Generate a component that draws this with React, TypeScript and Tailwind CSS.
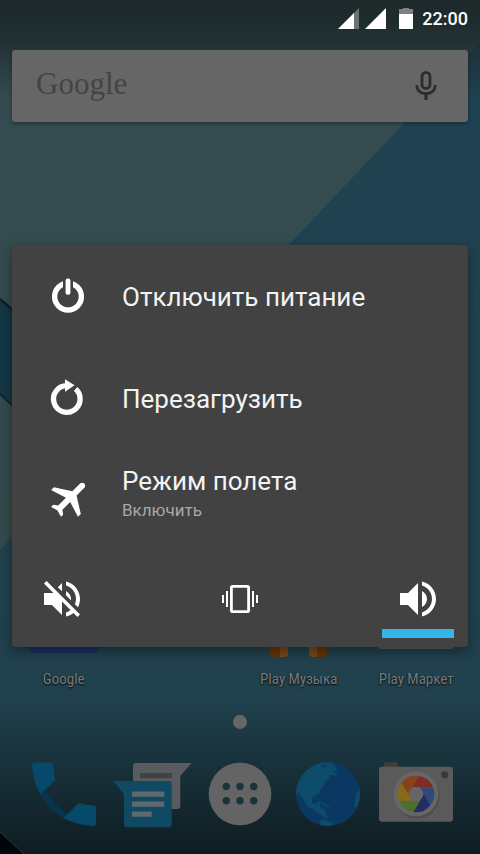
import React, { useState } from 'react';

type RingMode = 'silent' | 'vibrate' | 'normal';

const BLADES = ['#822a24', '#2f4a7a', '#262c60', '#4a702c', '#86691a', '#85431a'];

function Wallpaper() {
  return (
    <svg className="absolute inset-0 h-full w-full" viewBox="0 0 480 854" preserveAspectRatio="none" aria-hidden="true">
      <defs>
        <linearGradient id="paper" x1="0" y1="0" x2="0" y2="1">
          <stop offset="0" stopColor="#2f464c" />
          <stop offset="0.15" stopColor="#344c51" />
          <stop offset="1" stopColor="#35494b" />
        </linearGradient>
        <linearGradient id="water" x1="0" y1="0" x2="0" y2="1">
          <stop offset="0" stopColor="#1f4252" />
          <stop offset="0.7" stopColor="#20414d" />
          <stop offset="1" stopColor="#1f404c" />
        </linearGradient>
        <linearGradient id="topShade" x1="0" y1="0" x2="0" y2="1">
          <stop offset="0" stopColor="#1a2425" stopOpacity="0.9" />
          <stop offset="0.4" stopColor="#1a2425" stopOpacity="0.65" />
          <stop offset="1" stopColor="#1a2425" stopOpacity="0" />
        </linearGradient>
        <linearGradient id="bottomShade" x1="0" y1="0" x2="0" y2="1">
          <stop offset="0" stopColor="#0c161b" stopOpacity="0" />
          <stop offset="1" stopColor="#0c161b" stopOpacity="0.85" />
        </linearGradient>
      </defs>
      <rect width="480" height="854" fill="url(#water)" />
      <path d="M0 0H480V43L12 537L0 550Z" fill="url(#paper)" />
      <path d="M0 299L60 350V450L0 394Z" fill="#143646" />
      <path d="M0 299L60 350" stroke="#0d1a20" strokeWidth="2" />
      <path d="M0 394L60 450" stroke="#10242e" strokeWidth="2" />
      <rect width="480" height="100" fill="url(#topShade)" />
      <rect y="700" width="480" height="154" fill="url(#bottomShade)" />
      <path d="M0 832L24 854H0Z" fill="#02060a" />
      <path d="M0 832L24 854" stroke="#2a3b43" strokeWidth="1" />
    </svg>
  );
}

function StatusBar() {
  return (
    <header className="relative flex h-[38px] items-center justify-end px-3 text-white">
      <svg className="mr-[6px]" width="21" height="22" viewBox="0 0 21 22" aria-hidden="true">
        <path d="M21 0V21H0Z" fill="#6a7475" />
        <path d="M16 5V21H0Z" fill="#fff" />
      </svg>
      <svg className="mr-3" width="21" height="22" viewBox="0 0 21 22" aria-hidden="true">
        <path d="M21 0V21H0Z" fill="#fff" />
      </svg>
      <svg className="mr-[9px]" width="15" height="22" viewBox="0 0 15 22" aria-hidden="true">
        <path d="M5 -1H11V1H15V6H1V1H5Z" fill="#7a8283" />
        <path d="M1 6H15V21H1Z" fill="#fff" />
      </svg>
      <time className="text-[18px] leading-6 font-medium">22:00</time>
    </header>
  );
}

function SearchBar() {
  return (
    <form className="relative mx-3 mt-3 flex h-[72px] items-center rounded-[3px] bg-[#666] pr-5 pl-6 shadow-[0_2px_4px_rgba(0,0,0,0.3)]">
      <label htmlFor="search" className="pb-1 font-['Liberation_Serif',serif] text-[31px] leading-9 text-[#444]">
        Google
      </label>
      <input id="search" type="text" className="h-full min-w-0 flex-1 bg-transparent outline-none" />
      <button type="button" aria-label="Голосовой поиск">
        <svg width="44" height="44" viewBox="0 0 44 44" fill="none" stroke="#2d2d2d" strokeWidth="2.8">
          <rect x="18" y="8.4" width="8" height="16" rx="4" />
          <path d="M12.8 21C12.8 26.500 16.800 29.700 22 29.700S31.200 26.500 31.200 21" />
          <path d="M22 29.500V36" strokeWidth="3.2" />
        </svg>
      </button>
    </form>
  );
}

function AppLabel({ children }: { children: React.ReactNode }) {
  return (
    <span className="mt-[9px] font-['Roboto_Condensed','Liberation_Sans_Narrow',Roboto,sans-serif] text-[15px] leading-6 whitespace-nowrap text-[#777] [text-shadow:0_1px_2px_#000]">
      {children}
    </span>
  );
}

function AppRow() {
  return (
    <nav className="relative mt-auto grid grid-cols-4 px-[5px]">
      <a href="#google" className="flex flex-col items-center">
        <svg width="72" height="72" viewBox="0 0 72 72" aria-hidden="true">
          <rect x="2" y="4" width="68" height="63" rx="3" fill="#1d2d60" />
        </svg>
        <AppLabel>Google</AppLabel>
      </a>
      <a href="#music" className="col-start-3 flex flex-col items-center">
        <svg width="72" height="72" viewBox="0 0 72 72" aria-hidden="true">
          <path d="M6 62C-2 30 14 6 36 6S74 30 66 62" fill="none" stroke="#6b3208" strokeWidth="5" />
          <path d="M6 42H25V67Q25 71 21 71H12Q8 71 7 67Z" fill="#6b3208" />
          <path d="M16 42H25V67Q25 71 21 71H17Z" fill="#79481a" />
          <path d="M66 42H46V67Q46 71 50 71H60Q63 71 64 67Z" fill="#6b3208" />
          <path d="M55 42H46V67Q46 71 50 71H54Z" fill="#79481a" />
        </svg>
        <AppLabel>Play Музыка</AppLabel>
      </a>
      <a href="#market" className="flex flex-col items-center">
        <svg className="overflow-visible" width="72" height="72" viewBox="0 0 72 72" aria-hidden="true">
          <rect x="-2" y="12" width="76" height="51" rx="3" fill="#5c5f5f" />
        </svg>
        <AppLabel>Play Маркет</AppLabel>
      </a>
    </nav>
  );
}

function Dock() {
  return (
    <nav className="relative grid grid-cols-5 justify-items-center px-5 pb-6">
      <button type="button" aria-label="Телефон">
        <svg width="72" height="72" viewBox="0 0 72 72">
          <path d="M6.500 4.500H22.500Q25 4.500 25.200 7L27 22L12.700 36.700C7 27 4.500 17 4 7Q4 4.500 6.500 4.500Z" fill="#07496a" />
          <path d="M12.700 36.700L17.500 32C22 42 30 50 40 55.700L35.300 60.300C25 54.500 18 46.500 12.700 36.700Z" fill="#06344f" />
          <path d="M51 45Q58 47.500 65.500 47.500Q68 47.500 68 50V65.500Q68 68 65.500 68C55 67.500 45 65 35.300 60.300Z" fill="#07496a" />
        </svg>
      </button>
      <button type="button" aria-label="Сообщения">
        <svg className="overflow-visible" width="72" height="72" viewBox="0 0 72 72">
          <path d="M20 5H75.700L64.300 18V48Q64.300 51 61.300 51H20Q17 51 17 48V8Q17 5 20 5Z" fill="#585c5e" />
          <path d="M24 15H56.300V20.300H24Z" fill="#3f4345" />
          <path d="M-2.700 23H52.700Q55.700 23 55.700 26V66.300Q55.700 69.300 52.700 69.300H11Q8 69.300 8 66.300V36Z" fill="#0f4962" />
          <path d="M16 33.500H48.300V38.700H16ZM16 43.500H48.300V48.700H16ZM16 53.500H35.700V58.700H16Z" fill="#62696c" />
        </svg>
      </button>
      <button type="button" aria-label="Все приложения">
        <svg width="72" height="72" viewBox="0 0 72 72">
          <circle cx="36" cy="36" r="31.300" fill="#646464" />
          {[28.5, 42.7].map((cy) =>
            [22.3, 36, 49.7].map((cx) => <circle key={`${cx}-${cy}`} cx={cx} cy={cy} r="3.700" fill="#1b333b" />)
          )}
        </svg>
      </button>
      <button type="button" aria-label="Браузер">
        <svg width="72" height="72" viewBox="0 0 72 72">
          <defs>
            <clipPath id="globe">
              <circle cx="36" cy="36" r="32" />
            </clipPath>
          </defs>
          <g clipPath="url(#globe)">
            <rect width="72" height="72" fill="#0a3862" />
            <path d="M25 3H38L44 8L45 12L41 14L46 15L44 18L39 17L36 21L34 23L31 28L28 33L27 36L22 38L20 40V45L24 46L26 43L29 45L28 49L31 51L34 54L36 61L31 58L26 55L21 51L16 49L10 39L6 35L2 39V20Z" fill="#0c4b6a" />
            <path d="M28 42L34 47L38 49L37 50L31 47Z" fill="#0c4b6a" />
            <path d="M27 70L29 61L34 62L42 66L39 70Z" fill="#0c4b6a" />
            <path d="M69 29L64 36L63 45L62 49L66 50L70 40Z" fill="#0c4b6a" />
            <path d="M29 7L33 5L35 9L31 10Z" fill="#0a3f66" />
          </g>
        </svg>
      </button>
      <button type="button" aria-label="Камера">
        <svg className="overflow-visible" width="72" height="72" viewBox="0 0 72 72">
          <path d="M6 4H16Q18 4 18 6V10H4V6Q4 4 6 4Z" fill="#403d3d" />
          <rect x="-1" y="8.700" width="74" height="55" rx="3" fill="#5a5a5a" />
          <circle cx="64.700" cy="16.700" r="3.500" fill="#383838" />
          <circle cx="37" cy="38" r="22.500" fill="#4c4c4c" />
          <circle cx="36" cy="36" r="22.500" fill="#666" />
          <g transform="translate(36 36)">
            {BLADES.map((fill, i) => (
              <path key={fill} d="M-3.900 -6.800H17A18.300 18.300 0 0 0 2.600 -18.100Z" fill={fill} transform={`rotate(${i * 60})`} />
            ))}
            <circle r="7.200" fill="#666" />
          </g>
        </svg>
      </button>
    </nav>
  );
}

interface MenuItemProps {
  icon: React.ReactNode;
  title: string;
  subtitle?: string;
}

function MenuItem({ icon, title, subtitle }: MenuItemProps) {
  return (
    <button type="button" className="flex h-[102px] w-full items-center gap-[34px] px-9 text-left">
      <svg className="shrink-0" width="40" height="40" viewBox="0 0 40 40" fill="none" aria-hidden="true">
        {icon}
      </svg>
      <span className={subtitle ? 'flex flex-col pb-3' : 'flex flex-col pt-0.5'}>
        <span className="text-[26px] leading-8 text-[#f3f3f3]">{title}</span>
        {subtitle && <span className="text-[17px] leading-[26px] text-[#a9a9a9]">{subtitle}</span>}
      </span>
    </button>
  );
}

const RING_MODES: { mode: RingMode; label: string; icon: React.ReactNode }[] = [
  {
    mode: 'silent',
    label: 'Без звука',
    icon: (
      <path d="M16.500 12c0-1.770-1.020-3.290-2.500-4.030v2.210l2.450 2.450c.03-.2.05-.41.05-.63zm2.500 0c0 .94-.2 1.820-.54 2.640l1.510 1.510C20.630 14.910 21 13.500 21 12c0-4.280-2.990-7.860-7-8.770v2.060c2.890.86 5 3.540 5 6.710zM4.270 3L3 4.270 7.730 9H3v6h4l5 5v-6.730l4.250 4.250c-.67.52-1.420.93-2.250 1.180v2.060c1.380-.31 2.630-.95 3.690-1.810L19.730 21 21 19.730l-9-9L4.270 3zM12 4L9.910 6.090 12 8.180V4z" />
    ),
  },
  {
    mode: 'vibrate',
    label: 'Вибрация',
    icon: (
      <>
        <path d="M3 10h1v4H3zM5 8h1v8H5zM18 8h1v8h-1zM20 10h1v4h-1z" />
        <rect x="7.700" y="5.700" width="8.600" height="12.600" rx="0.700" fill="none" stroke="#fff" strokeWidth="1.400" />
      </>
    ),
  },
  {
    mode: 'normal',
    label: 'Со звуком',
    icon: (
      <path d="M3 9v6h4l5 5V4L7 9H3zm13.500 3c0-1.770-1.020-3.290-2.500-4.030v8.050c1.480-.73 2.500-2.250 2.500-4.020zM14 3.230v2.060c2.890.86 5 3.540 5 6.710s-2.110 5.850-5 6.710v2.060c4.010-.91 7-4.490 7-8.770s-2.990-7.860-7-8.770z" />
    ),
  },
];

function PowerMenu() {
  const [ringMode, setRingMode] = useState<RingMode>('normal');

  return (
    <div role="dialog" aria-label="Меню питания" className="w-full rounded bg-[#424242] shadow-[0_4px_12px_rgba(0,0,0,0.4)]">
      <MenuItem
        title="Отключить питание"
        icon={
          <>
            <circle cx="20" cy="20.600" r="13.400" stroke="#fff" strokeWidth="5.400" />
            <path d="M15 0H25V19H15Z" fill="#424242" />
            <rect x="17.600" y="2.600" width="4.800" height="16.200" rx="2" fill="#fff" />
          </>
        }
      />
      <MenuItem
        title="Перезагрузить"
        icon={
          <>
            <path d="M27.600 11A13.300 13.300 0 1 1 19 7.700" stroke="#fff" strokeWidth="5.300" />
            <path d="M17 1.300L26.600 7.300L17 13.700Z" fill="#fff" />
          </>
        }
      />
      <MenuItem
        title="Режим полета"
        subtitle="Включить"
        icon={
          <path
            transform="translate(22.900 -15.500) scale(2) rotate(45)"
            fill="#fff"
            d="M21 16v-2l-8-5V3.500c0-.83-.67-1.500-1.500-1.500S10 2.670 10 3.500V9l-8 5v2l8-2.500V19l-2 1.500V22l3.500-1 3.500 1v-1.500L13 19v-5.500l8 2.500z"
          />
        }
      />
      <div className="flex h-24 justify-between px-[14px]">
        {RING_MODES.map(({ mode, label, icon }) => (
          <button
            key={mode}
            type="button"
            aria-label={label}
            aria-pressed={ringMode === mode}
            onClick={() => setRingMode(mode)}
            className="flex w-[72px] flex-col items-center justify-between pt-6 pb-[9px]"
          >
            <svg width="48" height="48" viewBox="0 0 24 24" fill="#fff">
              {icon}
            </svg>
            <span className={ringMode === mode ? 'h-[9px] w-full bg-[#33b5e5]' : 'h-[9px] w-full'} />
          </button>
        ))}
      </div>
    </div>
  );
}

export default function App() {
  return (
    <main className="relative flex min-h-screen flex-col overflow-hidden bg-[#20434f] font-[Roboto,sans-serif]">
      <Wallpaper />
      <StatusBar />
      <SearchBar />
      <AppRow />
      <div className="relative mx-auto mt-6 mb-[29px] size-[14px] rounded-full bg-[#666]" />
      <Dock />
      <div className="absolute inset-0 flex items-center px-3 pt-[38px]">
        <PowerMenu />
      </div>
    </main>
  );
}
